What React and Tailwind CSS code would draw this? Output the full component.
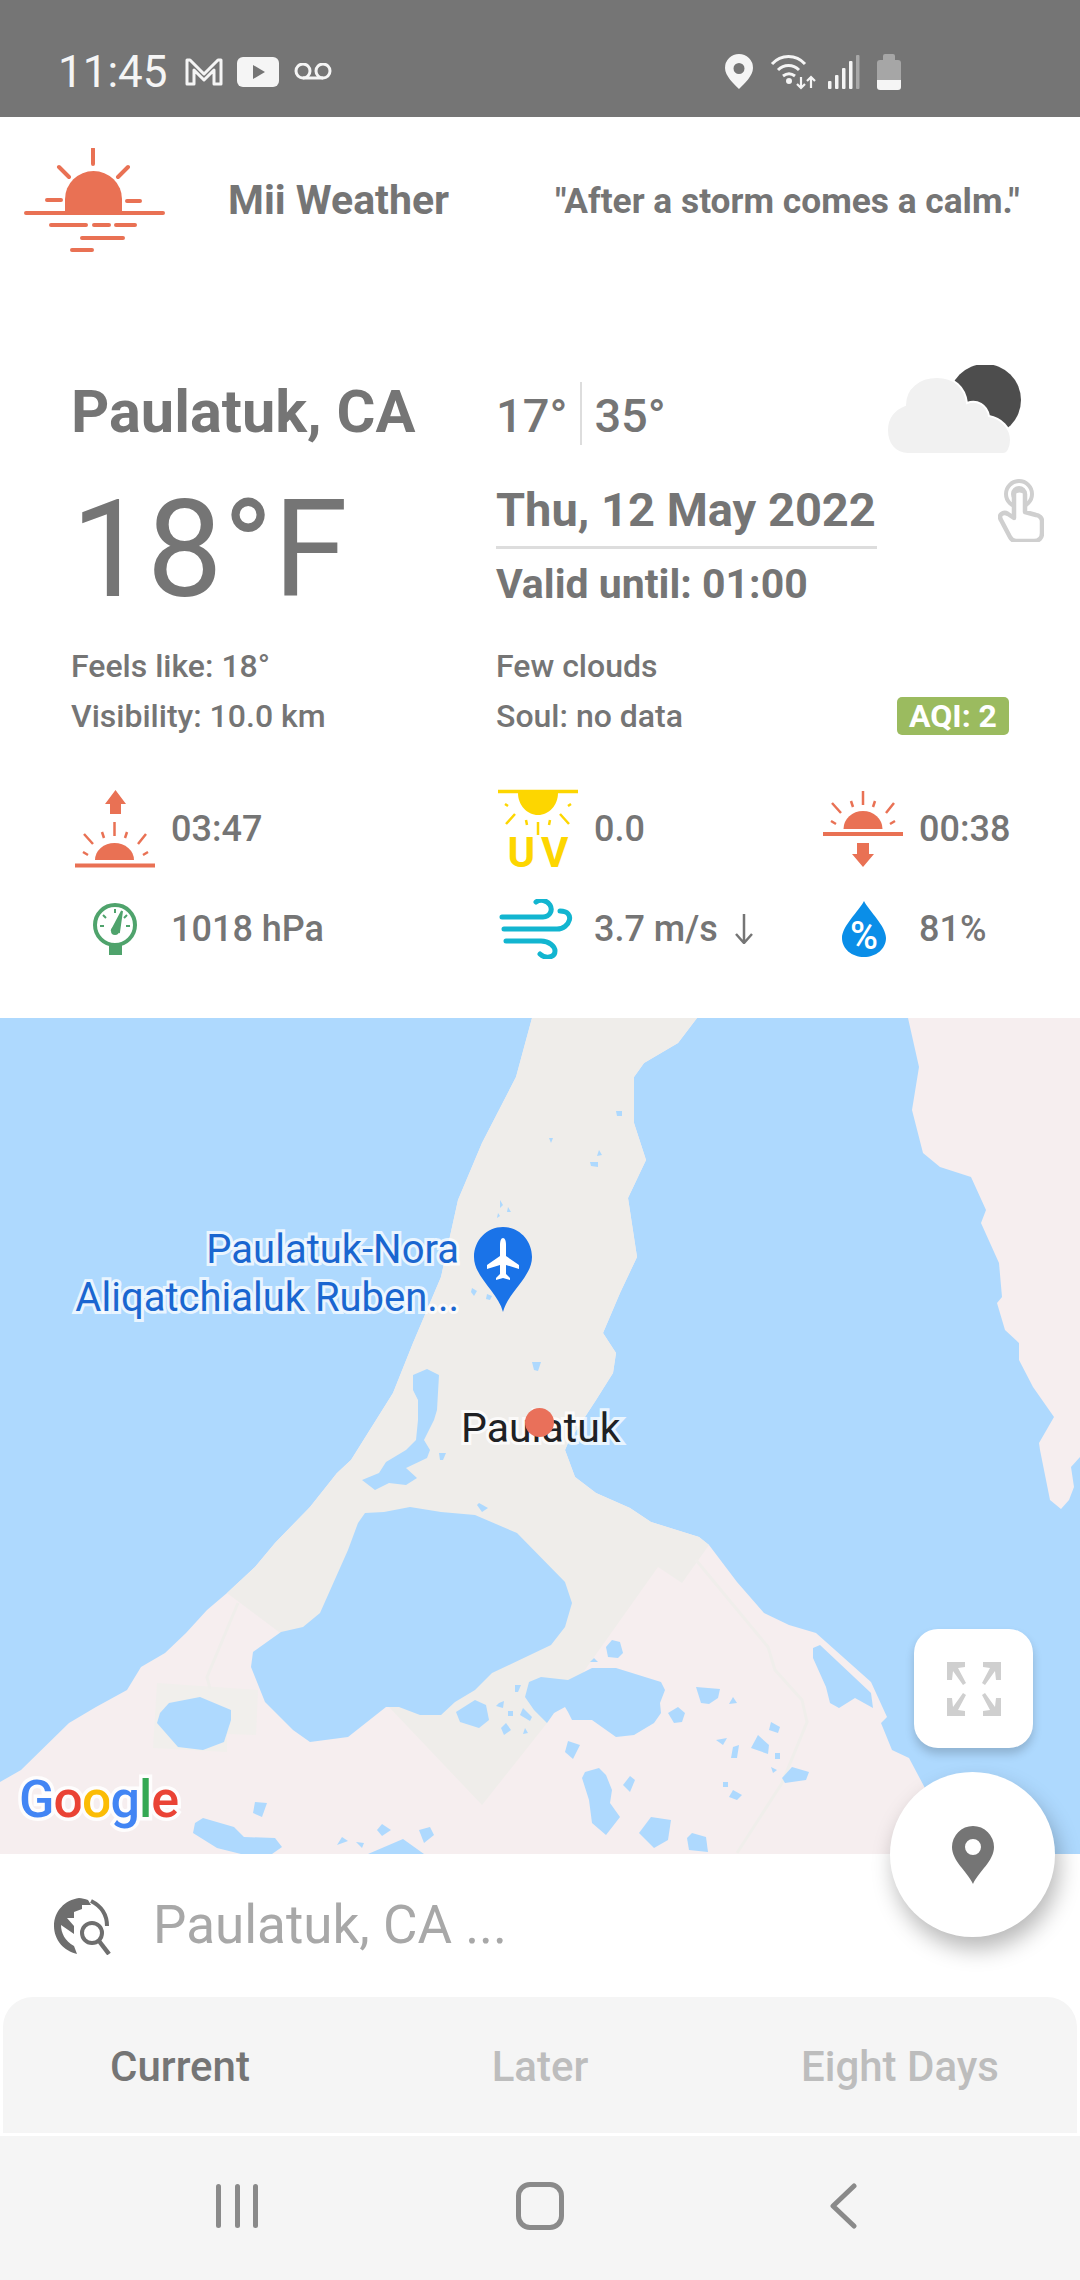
const orange = '#e97154';

const landOutline = '532,1018 516,1077 482,1143 458,1200 441,1277 413,1343 393,1393 351,1460 337,1473 310,1507 275,1543 255,1567 227,1593 207,1610 186,1633 165,1653 141,1667 127,1690 96,1707 69,1723 21,1770 0,1782 0,1854 945,1854 926,1790 909,1758 892,1750 881,1723 887,1717 871,1682 816,1633 789,1625 764,1613 737,1582 709,1545 699,1537 651,1522 630,1508 596,1493 575,1477 565,1450 568,1443 596,1400 613,1373 616,1353 603,1333 620,1293 637,1257 628,1198 646,1160 634,1123 634,1077 644,1063 678,1043 697,1018';
const beige = '532,1018 516,1077 482,1143 458,1200 441,1277 413,1343 393,1393 351,1460 337,1473 310,1507 275,1543 255,1567 227,1593 279,1632 389,1707 482,1805 547,1723 592,1660 658,1567 682,1583 709,1545 699,1537 651,1522 630,1508 596,1493 575,1477 565,1450 568,1443 596,1400 613,1373 616,1353 603,1333 620,1293 637,1257 628,1198 646,1160 634,1123 634,1077 644,1063 678,1043 697,1018';
const beigeSquare = '157,1683 258,1690 256,1735 227,1734 227,1752 153,1748';
const rightLand = '908,1018 919,1067 912,1110 923,1153 940,1167 971,1177 986,1210 981,1223 999,1263 1002,1297 997,1303 1005,1330 1019,1343 1019,1360 1033,1387 1054,1417 1039,1443 1040,1450 1050,1500 1061,1509 1069,1500 1074,1487 1071,1467 1080,1457 1080,1018';

const lakes = [
  '365,1513 384,1512 410,1507 441,1512 475,1515 517,1533 565,1582 572,1603 565,1627 551,1645 492,1673 475,1690 455,1702 441,1715 420,1715 399,1707 386,1707 348,1737 310,1742 293,1730 265,1702 251,1667 253,1652 281,1632 303,1627 320,1613 348,1550 358,1523',
  '541,1677 568,1680 592,1668 616,1668 661,1682 665,1690 660,1703 661,1713 654,1723 634,1735 616,1737 592,1720 572,1720 568,1712 565,1707 554,1713 547,1723 534,1710 525,1697 529,1682',
  '169,1703 200,1697 231,1710 231,1720 224,1742 203,1750 178,1747 157,1723 160,1713',
  '413,1375 427,1369 439,1375 437,1410 434,1420 424,1440 430,1450 427,1458 406,1468 417,1478 406,1485 389,1483 375,1490 362,1480 379,1473 386,1462 406,1450 416,1440 418,1420 418,1400 413,1390',
  '813,1648 820,1645 871,1693 873,1708 855,1698 839,1708 830,1703 826,1687 813,1658',
  '612,1640 620,1642 623,1653 618,1658 608,1657 606,1647',
  '475,1700 486,1705 489,1720 479,1728 460,1722 456,1712',
  '696,1687 720,1689 718,1698 709,1704 701,1703',
  '678,1707 685,1713 682,1722 674,1723 668,1713',
  '733,1697 737,1703 729,1704',
  '568,1741 580,1745 573,1759 565,1752',
  '585,1772 599,1768 606,1775 612,1790 610,1803 620,1817 606,1835 592,1823 589,1800 582,1778',
  '651,1817 671,1820 668,1840 654,1848 639,1833',
  '692,1833 706,1837 708,1852 689,1850 687,1838',
  '792,1767 809,1772 806,1780 785,1783 782,1778',
  '758,1735 769,1745 768,1754 751,1748',
  '630,1776 635,1780 630,1792 623,1785',
  '203,1818 234,1827 244,1837 275,1838 282,1847 272,1854 241,1854 217,1848 193,1833 195,1823',
  '368,1854 403,1839 424,1854',
  '430,1827 434,1835 424,1843 419,1830',
  '382,1824 391,1830 382,1836 377,1830',
  '255,1802 267,1803 262,1817 253,1813',
  '342,1837 348,1841 337,1845',
  '356,1842 364,1843 362,1848',
  '716,1740 727,1738 723,1745',
  '733,1747 739,1745 737,1758 731,1758',
  '771,1722 780,1727 778,1733 769,1730',
  '775,1753 780,1753 780,1759 775,1759',
  '771,1767 777,1770 773,1773',
  '723,1782 728,1782 728,1787 723,1787',
  '733,1790 742,1795 737,1800 729,1797',
  '515,1685 521,1685 518,1692 515,1692',
  '499,1703 504,1701 503,1708 496,1706',
  '508,1711 513,1711 513,1716 508,1716',
  '523,1708 532,1717 530,1721 520,1715',
  '506,1723 511,1730 504,1735 501,1728',
  '525,1728 528,1733 523,1734',
  '594,1658 598,1662 590,1662',
  '479,1503 488,1508 482,1512 477,1505',
  '616,1111 622,1111 622,1116 617,1116',
  '549,1138 553,1138 551,1143',
  '599,1150 602,1155 597,1156',
  '590,1162 598,1162 598,1167 591,1166',
  '500,1200 503,1205 500,1208',
  '508,1207 511,1212 507,1212',
  '498,1213 500,1216 497,1218',
  '472,1288 477,1291 474,1296 471,1292',
  '487,1294 492,1296 490,1300 486,1299',
  '532,1362 541,1362 538,1371 534,1370',
  '439,1453 446,1453 443,1460 440,1460',
];

function StatusIcons() {
  return (
    <div className="ml-auto mr-[179px] flex items-center">
      {/* location */}
      <svg width="28" height="35" viewBox="0 0 28 35">
        <path fillRule="evenodd" d="M14 0a14 14 0 0 1 14 14c0 8-9 16-14 21C9 30 0 22 0 14A14 14 0 0 1 14 0Zm0 9a5.500 5.500 0 1 0 0 11 5.500 5.500 0 0 0 0-11Z" fill="#f5f5f5" />
      </svg>
      {/* wifi with arrows */}
      <svg className="ml-[17px]" width="46" height="36" viewBox="0 0 46 36" fill="none" stroke="#f5f5f5" strokeWidth="3">
        <path d="M2 10C11 0 26 0 35 10" />
        <path d="M8 16c6-6 15-6 21 0" />
        <path d="M13 22c4-3 8-3 12 0" />
        <circle cx="19" cy="27" r="1.500" fill="#f5f5f5" />
        <path d="M31 23v11M27 30l4 4 4-4" strokeWidth="2.200" />
        <path d="M41 34V23M37 27l4-4 4 4" strokeWidth="2.200" />
      </svg>
      {/* signal */}
      <svg className="ml-[12px]" width="32" height="34" viewBox="0 0 32 34" fill="#f5f5f5">
        <rect x="0" y="26" width="3.500" height="8" rx="1" />
        <rect x="7" y="20" width="3.500" height="14" rx="1" />
        <rect x="14" y="13" width="3.500" height="21" rx="1" />
        <rect x="21" y="6" width="3.500" height="28" rx="1" />
        <rect x="28" y="0" width="3.500" height="34" rx="1" fill="#a8a8a8" />
      </svg>
      {/* battery */}
      <div className="ml-[17px] flex h-[36px] w-[24px] flex-col items-center">
        <div className="h-[6px] w-[12px] rounded-t-[2px] bg-[#a6a6a6]" />
        <div className="h-[20px] w-[24px] rounded-t-[3px] bg-[#a6a6a6]" />
        <div className="h-[10px] w-[24px] rounded-b-[3px] bg-[#f5f5f5]" />
      </div>
    </div>
  );
}

function StatusBar() {
  return (
    <div className="flex h-[117px] items-center bg-[#757575] pt-[26px] font-['Roboto',sans-serif] text-[#f5f5f5]">
      <span className="ml-[58px] text-[44px] leading-none">11:45</span>
      <svg className="ml-[17px]" width="38" height="29" viewBox="0 0 38 29" fill="none" stroke="#f5f5f5" strokeWidth="3" strokeLinejoin="round">
        <path d="M2 27V3h3l14 14L33 3h3v24h-7V13L19 23 9 13v14Z" />
      </svg>
      <svg className="ml-[14px]" width="42" height="30" viewBox="0 0 42 30">
        <rect width="42" height="30" rx="6" fill="#f5f5f5" />
        <path d="M16 8l12 7-12 7Z" fill="#757575" />
      </svg>
      <svg className="ml-[15px]" width="38" height="18" viewBox="0 0 38 18" fill="none" stroke="#f5f5f5" strokeWidth="3">
        <circle cx="9" cy="8" r="7" />
        <circle cx="29" cy="8" r="7" />
        <path d="M9 15h20" />
      </svg>
      <StatusIcons />
    </div>
  );
}

function Logo() {
  return (
    <svg className="ml-[24px]" width="141" height="106" viewBox="24 147 141 106" fill="none" stroke={orange} strokeWidth="4" strokeLinecap="round">
      <path d="M65 212v-14a28.500 28 0 0 1 57 0v14Z" fill={orange} stroke="none" />
      <path d="M93 148v15M59 166l10 10M128 166l-10 10M47 199h14M127 200h13M26 212h137" />
      <path d="M51 224h35M94 224h15M116 224h19M82 237h41M72 249h20" />
    </svg>
  );
}

function Header() {
  return (
    <div className="flex h-[166px] items-center pt-[2px] font-['Roboto',sans-serif] font-bold text-[#757575]">
      <Logo />
      <span className="ml-[63px] text-[41px]">Mii Weather</span>
      <span className="ml-[106px] text-[35.300px]">"After a storm comes a calm."</span>
    </div>
  );
}

function CloudIcon() {
  return (
    <svg width="135" height="90" viewBox="887 365 135 90">
      <circle cx="985" cy="400" r="36" fill="#4d4d4d" />
      <path d="M908 454c-13 0-21-10-21-24 0-12 7-21 18-25 0-17 14-28 32-28 17 0 28 10 30 26 10-4 20 2 22 13 12 2 22 12 22 24 0 7-3 14-8 14Z" fill="#f1f1f1" stroke="#fff" strokeWidth="2" />
    </svg>
  );
}

function HandIcon() {
  return (
    <svg width="46" height="63" viewBox="998 480 46 63" fill="none" stroke="#cfcfcf" strokeLinejoin="round" strokeLinecap="round">
      <circle cx="1019" cy="495" r="13" strokeWidth="4" />
      <circle cx="1019" cy="495" r="6" strokeWidth="4" />
      <path d="M1014 495v24l-6-4c-5-3-10 1-7 6l9 17c1 2 3 4 6 4h18c5 0 8-3 8-8v-12c0-3-3-6-6-6l-11-3v-18c0-5-11-5-11 0Z" strokeWidth="4.500" fill="#fff" />
    </svg>
  );
}

function SunriseIcon() {
  return (
    <svg width="80" height="78" viewBox="75 789 80 78" fill="none" stroke={orange} strokeWidth="2.500">
      <path d="M95 859a19.500 17 0 0 1 39 0Z" fill={orange} stroke="none" />
      <path d="M75 864.500h80" strokeWidth="4" />
      <path d="M114.500 821v14M102 831l2 6M127 831l-2 6M84 833l9 10M146 833l-8 10M83 851l5 3M148 851l-5 3" />
      <path d="M115.500 789l10.500 14h-5v10h-11v-10h-5Z" fill={orange} stroke="none" />
    </svg>
  );
}

function SunsetIcon() {
  return (
    <svg width="80" height="78" viewBox="823 789 80 78" fill="none" stroke={orange} strokeWidth="2.500">
      <path d="M843.500 828a19.500 18 0 0 1 39 0Z" fill={orange} stroke="none" />
      <path d="M823 833h80" strokeWidth="4" />
      <path d="M863 790v14M851 800l2 6M875 800l-2 6M832 802l9 10M894 802l-8 10M831 820l5 3M895 820l-5 3" />
      <path d="M857 842h12v11h5l-11 13-11-13h5Z" fill={orange} stroke="none" />
    </svg>
  );
}

function UvIcon() {
  return (
    <svg className="overflow-visible" width="82" height="78" viewBox="498 788 82 78" fill="none" stroke="#fdd600" strokeWidth="2.500">
      <path d="M499 789.500h80" strokeWidth="3.500" />
      <path d="M519 791h40c0 12-9 22-20 22s-20-10-20-22Z" fill="#fdd600" stroke="none" />
      <path d="M539 820v13M527 818l1 5M551 818l-1 5M516 812l-9 10M561 812l9 10M506 802l3 2M572 802l-3 2" />
      <text x="542" y="865" textAnchor="middle" fontFamily="Roboto, sans-serif" fontSize="42" fontWeight="700" letterSpacing="6" fill="#fdd600" stroke="none">UV</text>
    </svg>
  );
}

function GaugeIcon() {
  return (
    <svg width="44" height="53" viewBox="93 900 44 53" fill="none" stroke="#4fa36c" strokeWidth="2">
      <rect x="109" y="938" width="13" height="14" fill="#4fa36c" stroke="none" />
      <circle cx="115" cy="922" r="20" strokeWidth="4" fill="#fff" />
      <path d="M115 906v4M103 912l3 3M127 912l-3 3M100 923h4M126 923h4" />
      <path d="M112 927l10-19-3 21Z" fill="#4fa36c" />
      <circle cx="115" cy="928" r="4" fill="#4fa36c" stroke="none" />
    </svg>
  );
}

function WindIcon() {
  return (
    <svg width="78" height="60" viewBox="500 897 78 60" fill="none" stroke="#12b5d0" strokeWidth="5" strokeLinecap="round">
      <path d="M503 915h41c7 0 10-7 7-12-3-5-10-6-14-3" />
      <path d="M505 927h53c13 0 19-18 3-18" />
      <path d="M507 939h35c8 0 14 5 14 10 0 7-10 8-15 3" />
    </svg>
  );
}

function DropIcon() {
  return (
    <svg className="overflow-visible" width="45" height="56" viewBox="840 900 45 56">
      <path d="M863 900c5 10 22 25 22 37 0 11-10 19-22 19s-22-8-22-19c0-12 17-27 22-37Z" fill="#0a8ee8" />
      <text x="863" y="948" textAnchor="middle" fontFamily="Roboto, sans-serif" fontSize="38" fontWeight="500" fill="#fff">%</text>
    </svg>
  );
}

function Stat({ icon, children }) {
  return (
    <div className="flex h-[100px] items-center">
      <div className="flex w-[96px] justify-start pr-[16px]">
        <div className="flex w-[80px] justify-center">{icon}</div>
      </div>
      <span className="flex items-center text-[36px] font-medium text-[#757575]">{children}</span>
    </div>
  );
}

function Weather() {
  return (
    <div className="h-[735px] font-['Roboto',sans-serif] text-[#757575]">
      <div className="flex">
        <div className="w-[496px] pl-[71px]">
          <div className="mt-[91px] text-[59.500px] font-bold leading-[76px]">Paulatuk, CA</div>
          <div className="mt-[30px] text-[135px] leading-[140px]">18°F</div>
          <div className="mt-[21px] text-[32px] font-medium leading-[50px]">Feels like: 18°</div>
          <div className="text-[32px] font-medium leading-[50px]">Visibility: 10.0 km</div>
        </div>
        <div className="flex-1">
          <div className="mt-[82px] flex h-[89px] items-center pr-[58px]">
            <span className="mt-[12px] text-[47px] font-medium leading-[63px]">17°</span>
            <div className="ml-[13px] mr-[12px] mt-[8px] h-[63px] w-[2px] bg-[#dddddd]" />
            <span className="mt-[12px] text-[47px] font-medium leading-[63px]">35°</span>
            <div className="ml-auto">
              <CloudIcon />
            </div>
          </div>
          <div className="flex pr-[36px]">
            <div className="mt-[28px] w-[381px] border-b-[3px] border-[#dddddd] pb-[8px] text-[47px] font-bold leading-[56px]">Thu, 12 May 2022</div>
            <div className="ml-auto mt-[25px]">
              <HandIcon />
            </div>
          </div>
          <div className="mt-[10px] text-[41px] font-bold leading-[50px]">Valid until: 01:00</div>
          <div className="mt-[32px] text-[32px] font-medium leading-[50px]">Few clouds</div>
          <div className="flex items-center justify-between pr-[71px] text-[32px] font-medium leading-[50px]">
            <span>Soul: no data</span>
            <span className="flex h-[38px] w-[112px] items-center justify-center rounded-[5px] bg-[#9bbb5f] font-bold text-white">AQI: 2</span>
          </div>
        </div>
      </div>
      <div className="mt-[38px] grid grid-cols-[423px_325px_1fr] pl-[75px]">
        <Stat icon={<SunriseIcon />}>03:47</Stat>
        <Stat icon={<UvIcon />}>0.0</Stat>
        <Stat icon={<SunsetIcon />}>00:38</Stat>
        <Stat icon={<GaugeIcon />}>1018 hPa</Stat>
        <Stat icon={<WindIcon />}>
          3.7 m/s
          <svg className="ml-[16px]" width="20" height="30" viewBox="0 0 20 30" fill="none" stroke="#757575" strokeWidth="2.500">
            <path d="M10 0v29M2 20l8 9 8-9" />
          </svg>
        </Stat>
        <Stat icon={<DropIcon />}>81%</Stat>
      </div>
    </div>
  );
}

function ExpandIcon() {
  return (
    <svg width="54" height="54" viewBox="0 0 54 54" fill="#cfcfcf">
      <path d="M0 0h18v5l-7 1 8 15-3 2-10-14-1 9H0Z" />
      <path d="M54 0H36v5l7 1-8 15 3 2L48 9l1 9h5Z" />
      <path d="M0 54h18v-5l-7-1 8-15-3-2L6 45l-1-9H0Z" />
      <path d="M54 54H36v-5l7-1-8-15 3-2 10 14 1-9h5Z" />
    </svg>
  );
}

function MapView() {
  const labelHalo = "[-webkit-text-stroke:6px_rgba(255,255,255,0.75)] [paint-order:stroke_fill]";
  return (
    <div className="relative h-[836px] bg-[#aed9fe] font-['Roboto',sans-serif]">
      <svg className="block" width="1080" height="836" viewBox="0 1018 1080 836">
        <polygon points={landOutline} fill="#f6eeef" />
        <polygon points={rightLand} fill="#f6eeef" />
        <polygon points={beige} fill="#efedea" />
        <polygon points={beigeSquare} fill="#f1efec" />
        <path d="M238 1603l-31 74 3 12M696 1560l72 87 7 23 27 30 5 22-25 61-45 70" fill="none" stroke="#f0eeeb" strokeWidth="3" />
        {lakes.map((points, i) => (
          <polygon key={i} points={points} fill="#aed9fe" />
        ))}
        {/* airport pin */}
        <path d="M503 1227c16 0 29 13 29 30 0 20-24 35-29 55-5-20-29-35-29-55 0-17 13-30 29-30Z" fill="#1a73e8" />
        <path d="M503 1238c2 0 3 3 3 7v11l13 9v4l-13-4v9l4 4v2l-7-2-7 2v-2l4-4v-9l-13 4v-4l13-9v-11c0-4 1-7 3-7Z" fill="#fff" />
      </svg>
      <div className={`absolute right-[621px] top-[208px] whitespace-nowrap text-right text-[40px] leading-[48px] text-[#1a66d0] ${labelHalo}`}>
        Paulatuk-Nora
        <br />
        Aliqatchialuk Ruben...
      </div>
      <div className={`absolute left-[461px] top-[386px] text-[41px] leading-[48px] text-[#202124] ${labelHalo}`}>Paulatuk</div>
      <div className="absolute left-[525px] top-[390px] h-[29px] w-[29px] rounded-full bg-[#e9705a]" />
      <div className="absolute left-[19px] top-[752px] text-[52px] font-medium leading-[60px] tracking-[-1px] [-webkit-text-stroke:7px_rgba(255,255,255,0.85)] [paint-order:stroke_fill]">
        <span className="text-[#4285f4]">G</span>
        <span className="text-[#ea4335]">o</span>
        <span className="text-[#fbbc05]">o</span>
        <span className="text-[#4285f4]">g</span>
        <span className="text-[#34a853]">l</span>
        <span className="text-[#ea4335]">e</span>
      </div>
      <div className="absolute left-[914px] top-[611px] flex h-[119px] w-[119px] items-center justify-center rounded-[24px] bg-white shadow-[0_6px_10px_rgba(0,0,0,0.18)]">
        <ExpandIcon />
      </div>
    </div>
  );
}

function Search() {
  return (
    <div className="flex h-[143px] items-center font-['Roboto',sans-serif]">
      <svg className="ml-[53px]" width="60" height="58" viewBox="0 0 60 58" fill="none">
        <path d="M26 1C12 3 1 14 1 29c0 14 10 25 23 28l-3-8C12 44 8 36 8 28l13 9v-8l-7-8h7v-6l8-3V8h9l-3-5c-3-1-6-2-9-2Z" fill="#6e6e6e" />
        <path d="M38 4c10 5 16 14 16 25" stroke="#6e6e6e" strokeWidth="4" />
        <circle cx="39" cy="36" r="10" stroke="#6e6e6e" strokeWidth="4" fill="#fff" />
        <path d="M46 44l10 13" stroke="#6e6e6e" strokeWidth="4.500" />
      </svg>
      <span className="ml-[40px] text-[53px] leading-none text-[#a8a8a8]">Paulatuk, CA ...</span>
    </div>
  );
}

function Tabs() {
  return (
    <div className="mx-[3px] h-[136px] rounded-t-[30px] bg-[#f5f5f5] pt-[3px] font-['Roboto',sans-serif] text-[42px]">
      <div className="-mx-[3px] grid h-full grid-cols-3 items-center text-center font-medium">
        <span className="text-[#757575]">Current</span>
        <span className="text-[#bdbdbd]">Later</span>
        <span className="text-[#bdbdbd]">Eight Days</span>
      </div>
    </div>
  );
}

function NavBar() {
  return (
    <div className="mt-[3px] grid h-[144px] grid-cols-3 items-center justify-items-center bg-[#f5f5f5] px-[86px] pb-[4px]">
      <div className="flex h-[44px] w-[42px] justify-between">
        <div className="w-[5px] rounded-full bg-[#8a8a8a]" />
        <div className="w-[5px] rounded-full bg-[#8a8a8a]" />
        <div className="w-[5px] rounded-full bg-[#8a8a8a]" />
      </div>
      <div className="h-[48px] w-[48px] rounded-[14px] border-[5px] border-[#8a8a8a]" />
      <svg width="28" height="46" viewBox="0 0 28 46" fill="none" stroke="#8a8a8a" strokeWidth="5" strokeLinecap="round" strokeLinejoin="round">
        <path d="M25 3L4 23l21 20" />
      </svg>
    </div>
  );
}

export default function App() {
  return (
    <div className="relative h-[2280px] w-[1080px] overflow-hidden bg-white">
      <StatusBar />
      <Header />
      <Weather />
      <MapView />
      <Search />
      <Tabs />
      <NavBar />
      {/* location button sits over the map edge */}
      <div className="absolute left-[890px] top-[1772px] flex h-[165px] w-[165px] items-center justify-center rounded-full bg-white shadow-[4px_12px_22px_rgba(0,0,0,0.28)]">
        <svg width="42" height="58" viewBox="0 0 42 58">
          <path fillRule="evenodd" d="M21 0a21 21 0 0 1 21 21c0 14-15 24-21 37C15 45 0 35 0 21A21 21 0 0 1 21 0Zm0 13a8 8 0 1 0 0 16 8 8 0 0 0 0-16Z" fill="#757575" />
        </svg>
      </div>
    </div>
  );
}
